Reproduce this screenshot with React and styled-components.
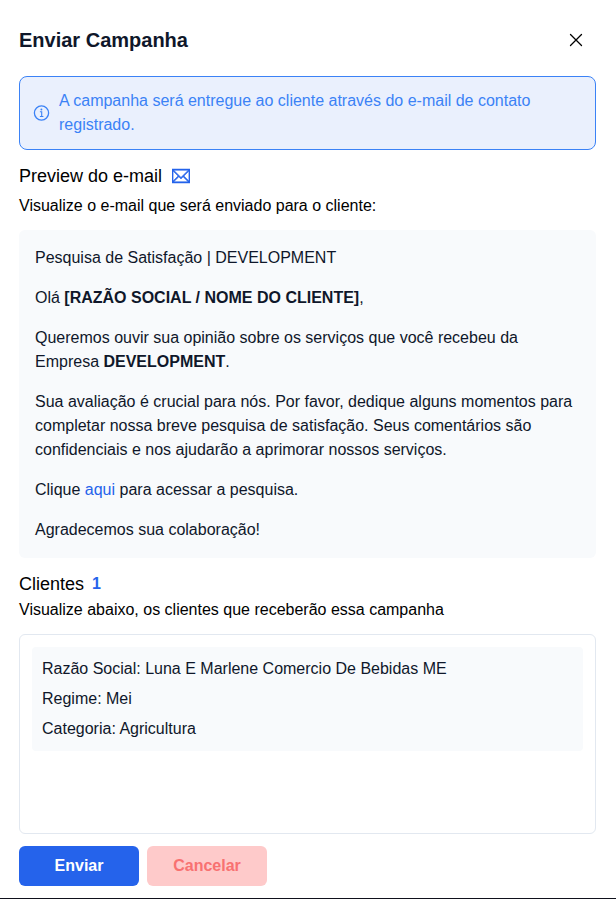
import React from "react";
import styled, { createGlobalStyle } from "styled-components";
import { TfiEmail } from "react-icons/tfi";

const GlobalStyle = createGlobalStyle`
  *, *::before, *::after { box-sizing: border-box; }
  body {
    margin: 0;
    background: #fff;
    font: 16px/24px "Liberation Sans", Arial, sans-serif;
    color: #000;
  }
  h2, h3, p { margin: 0; }
`;

const Modal = styled.main`
  height: 899px;
  padding: 20px 20px 12px 19px;
  border-bottom: 1px solid #0f111c;
  display: flex;
  flex-direction: column;
`;

const Header = styled.header`
  height: 40px;
  display: flex;
  align-items: center;
  justify-content: space-between;
`;

const Title = styled.h2`
  font-size: 20px;
  line-height: 28px;
  font-weight: 700;
  color: #0f172a;
`;

const CloseButton = styled.button`
  width: 40px;
  height: 40px;
  padding: 0;
  border: 0;
  background: none;
  color: #000;
  display: grid;
  place-items: center;
`;

const Notice = styled.div`
  margin-top: 16px;
  padding: 12px 13px;
  border: 1px solid #3b82f6;
  border-radius: 8px;
  background: #eaf0fd;
  color: #3b82f6;
  display: flex;
  align-items: center;
  gap: 9px;
  svg { flex: none; }
`;

const SectionTitle = styled.h3`
  margin-top: 12px;
  display: flex;
  align-items: center;
  gap: ${({ $gap }) => $gap}px;
  font-size: 18px;
  line-height: 28px;
  font-weight: 400;
  svg { color: #2563eb; }
`;

const Count = styled.span`
  font-size: 16px;
  font-weight: 700;
  color: #2563eb;
`;

const Description = styled.p`
  margin-top: ${({ $top = 0 }) => $top}px;
`;

const EmailPreview = styled.article`
  margin-top: 12px;
  padding: 16px;
  border-radius: 6px;
  background: #f8fafc;
  color: #0f172a;
  display: flex;
  flex-direction: column;
  gap: 16px;
`;

const Link = styled.a`
  color: #2563eb;
  text-decoration: none;
`;

const ClientList = styled.div`
  margin-top: 12px;
  height: 200px;
  padding: 12px;
  border: 1px solid #e2e8f0;
  border-radius: 6px;
`;

const ClientCard = styled.div`
  padding: 10px;
  border-radius: 4px;
  background: #f8fafc;
  color: #0f172a;
  display: flex;
  flex-direction: column;
  gap: 6px;
`;

const Actions = styled.footer`
  margin-top: 12px;
  display: flex;
  gap: 8px;
`;

const Button = styled.button`
  width: 120px;
  height: 40px;
  padding: 0;
  border: 0;
  border-radius: 6px;
  font: inherit;
  font-weight: 700;
  color: ${({ $danger }) => ($danger ? "#f87171" : "#fff")};
  background: ${({ $danger }) => ($danger ? "#fecaca" : "#2563eb")};
`;

const CloseIcon = () => (
  <svg width="14" height="14" viewBox="0 0 14 14" fill="none" stroke="currentColor" strokeWidth="1.3" strokeLinecap="round">
    <path d="M1.5 1.5 12.5 12.5M12.5 1.5 1.5 12.5" />
  </svg>
);

const InfoIcon = () => (
  <svg width="17" height="16" viewBox="0 0.5 17 16" fill="none" stroke="currentColor" strokeWidth="1.3">
    <circle cx="8.5" cy="8.5" r="7.1" />
    <path d="M6.9 7.3h1.8v4.7M6.9 12h3.5" strokeWidth="1.1" />
    <circle cx="8.4" cy="5" r="0.95" fill="currentColor" stroke="none" />
  </svg>
);

export default function App() {
  return (
    <>
      <GlobalStyle />
      <Modal>
        <Header>
          <Title>Enviar Campanha</Title>
          <CloseButton aria-label="Fechar">
            <CloseIcon />
          </CloseButton>
        </Header>
        <Notice>
          <InfoIcon />
          <p>A campanha será entregue ao cliente através do e-mail de contato registrado.</p>
        </Notice>
        <SectionTitle $gap={10}>
          Preview do e-mail
          <TfiEmail size={18} strokeWidth={0.6} />
        </SectionTitle>
        <Description $top={4}>Visualize o e-mail que será enviado para o cliente:</Description>
        <EmailPreview>
          <p>Pesquisa de Satisfação | DEVELOPMENT</p>
          <p>Olá <strong>[RAZÃO SOCIAL / NOME DO CLIENTE]</strong>,</p>
          <p>Queremos ouvir sua opinião sobre os serviços que você recebeu da Empresa <strong>DEVELOPMENT</strong>.</p>
          <p>Sua avaliação é crucial para nós. Por favor, dedique alguns momentos para completar nossa breve pesquisa de satisfação. Seus comentários são confidenciais e nos ajudarão a aprimorar nossos serviços.</p>
          <p>Clique <Link href="#">aqui</Link> para acessar a pesquisa.</p>
          <p>Agradecemos sua colaboração!</p>
        </EmailPreview>
        <SectionTitle $gap={8}>
          Clientes
          <Count>1</Count>
        </SectionTitle>
        <Description>Visualize abaixo, os clientes que receberão essa campanha</Description>
        <ClientList>
          <ClientCard>
            <p>Razão Social: Luna E Marlene Comercio De Bebidas ME</p>
            <p>Regime: Mei</p>
            <p>Categoria: Agricultura</p>
          </ClientCard>
        </ClientList>
        <Actions>
          <Button>Enviar</Button>
          <Button $danger>Cancelar</Button>
        </Actions>
      </Modal>
    </>
  );
}
